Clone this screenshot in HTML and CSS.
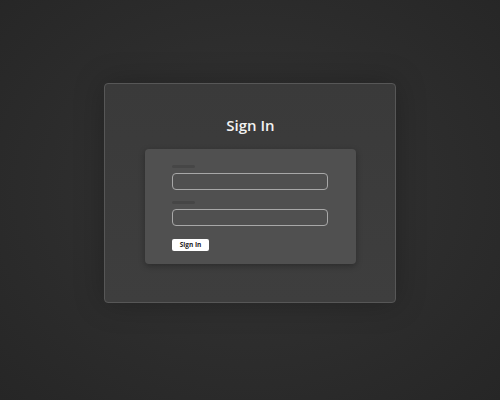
FILE: index.html
```html
<!DOCTYPE html>
<html>
  <head>
    <meta charset="UTF-8" />
    <meta name="viewport" content="width=device-width, initial-scale=1">
    <title>Sign In</title>
    <link rel="stylesheet" href="styles.css">
  </head>
  <body>
    <div class="login-shell">
      <div class="login-panel">
        <h1 class="login-title">Sign In</h1>

        <form class="login-form">
          <div class="field">
            <span class="field-label"></span>
            <input type="text" class="field-input" />
          </div>
          <div class="field">
            <span class="field-label"></span>
            <input type="password" class="field-input" />
          </div>
          <button type="button" class="login-button">Sign In</button>
        </form>
      </div>
    </div>
  </body>
</html>
```

FILE: styles.css
```css
:root {
  --page-dark: #262626;
  --page-mid: #333333;
  --panel-border: #575757;
  --form-bg: #505050;
  --label-bar: #464646;
  --input-border: #a8a8a8;
  --title: #f2f2f2;
}

* {
  margin: 0;
  padding: 0;
  box-sizing: border-box;
}

body {
  font-family: 'Open Sans', 'Noto Sans', sans-serif;
  background: radial-gradient(ellipse at 50% 48%, var(--page-mid) 0%, #2e2e2e 45%, var(--page-dark) 100%);
  min-height: 100vh;
  display: flex;
  justify-content: center;
}

.login-shell {
  padding-top: 83px;
}

.login-panel {
  width: 292px;
  height: 220px;
  background: linear-gradient(180deg, #3a3a3a 0%, #3e3e3e 100%);
  border: 1px solid var(--panel-border);
  border-radius: 4px;
  padding: 30px 39px 0 40px;
  display: flex;
  flex-direction: column;
  align-items: center;
  box-shadow: 0 0 30px rgba(0, 0, 0, 0.25);
}

.login-title {
  color: var(--title);
  font-size: 15px;
  font-weight: 600;
  line-height: 22px;
  margin-bottom: 13px;
}

.login-form {
  width: 211px;
  background: var(--form-bg);
  border-radius: 4px;
  padding: 16px 28px 13px 27px;
  box-shadow: 0 2px 6px rgba(0, 0, 0, 0.3);
}

.field {
  display: flex;
  flex-direction: column;
  margin-bottom: 11px;
}

.field-label {
  display: block;
  width: 23px;
  height: 3px;
  border-radius: 2px;
  background: var(--label-bar);
  margin-bottom: 5px;
}

.field-input {
  width: 156px;
  height: 17px;
  background: transparent;
  border: 1px solid var(--input-border);
  border-radius: 4px;
  outline: none;
}

.login-button {
  display: block;
  margin-top: 13px;
  width: 37px;
  height: 12px;
  background: #ffffff;
  border: none;
  border-radius: 2px;
  font-family: 'Open Sans', 'Noto Sans', sans-serif;
  font-size: 6.5px;
  font-weight: 700;
  color: #222222;
  line-height: 12px;
}
```
